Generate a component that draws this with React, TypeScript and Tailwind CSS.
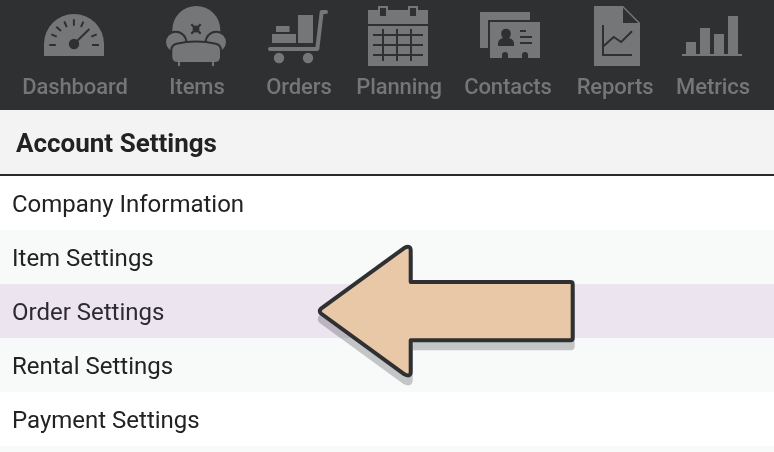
import type { ReactNode } from "react";

const dark = "#2f3032";
const grey = "#757678";

type Item = { label: string; cell: string; viewBox: string; icon: ReactNode };

const items: Item[] = [
  {
    label: "Dashboard",
    cell: "w-[150px]",
    viewBox: "45 6 60 60",
    icon: (
      <>
        <path d="M44 56V44a30 30 0 0 1 60 0v12z" />
        <path
          d="M49.3 45h6.5M51.3 34.3l5.4 2.4M56.3 26.7l4.7 4.3M64.3 21.3l2.4 5.7M73.9 19.3v6.4M83.4 21.7L81 27M96.7 34.3l-5.4 2.4M92 45h7M74 44l15.4-15"
          stroke={dark}
          strokeWidth="2"
        />
        <circle cx="74" cy="44" r="5.2" fill={dark} />
      </>
    ),
  },
  {
    label: "Items",
    cell: "w-[94px]",
    viewBox: "167 6 60 60",
    icon: (
      <>
        <path d="M172.3 50V30a24 24 0 0 1 48 0v20z" />
        <g stroke={dark} strokeWidth="4" paintOrder="stroke">
          <circle cx="175.7" cy="42.3" r="9.6" />
          <circle cx="216.3" cy="42.3" r="9.6" />
          <path d="M172.3 50.5Q172.3 46 176.8 44.8Q196 40.2 215.6 44.8Q220 46 220 50.5V56.5Q220 62 214.5 62H177.8Q172.3 62 172.3 56.5z" />
        </g>
        <path d="M178 61h2v5h-2zM212 61h2v5h-2z" />
        <path d="M191.3 24.3l9.4 9.4M200.7 24.3l-9.4 9.4" stroke={dark} strokeWidth="2.2" />
        <circle cx="196" cy="29" r="3.4" fill={dark} />
      </>
    ),
  },
  {
    label: "Orders",
    cell: "w-[110px]",
    viewBox: "269 6 60 60",
    icon: (
      <>
        <path d="M276 26h13.5v6H276zM272 34h24v9h-24zM298 15h15v28h-15z" />
        <path
          d="M270 49H317.3L321.7 12H326"
          fill="none"
          stroke={grey}
          strokeWidth="4"
          strokeLinecap="round"
          strokeLinejoin="round"
        />
        <circle cx="279" cy="58" r="5.2" />
        <circle cx="308" cy="58" r="5.2" />
      </>
    ),
  },
  {
    label: "Planning",
    cell: "w-[90px]",
    viewBox: "369 6 60 60",
    icon: (
      <>
        <path d="M368 10h60v14h-60zM368 26h60v40h-60zM378 6h10v10h-10zM408 6h10v10h-10z" />
        <path d="M380 8h6v8h-6zM410 8h6v8h-6z" fill={dark} />
        <path
          d="M373 35h50M373 45h50M373 55h50M383 29v32M397 29v32M411 29v32"
          stroke={dark}
          strokeWidth="2"
        />
      </>
    ),
  },
  {
    label: "Contacts",
    cell: "w-[128px]",
    viewBox: "478 6 60 60",
    icon: (
      <>
        <path d="M480 12h50v36h-50z" />
        <path d="M488 20h54v40h-54z" fill={dark} />
        <path d="M490 22h50v36h-50z" />
        <g fill={dark}>
          <path d="M498 46v-2.5c0-3 2-4.500 5-5.500c-1-1-1.800-2.500-1.800-4.500a4.800 4.800 0 0 1 9.600 0c0 2-.8 3.500-1.800 4.500c3 1 5 2.500 5 5.500V46z" />
          <path d="M520 30h6v2h-6zM520 36h12v2h-12zM520 42h12v2h-12z" />
          <path d="M502 58v-3a3 3 0 0 1 6 0v3zM522 58v-3a3 3 0 0 1 6 0v3z" />
        </g>
      </>
    ),
  },
  {
    label: "Reports",
    cell: "w-[86px]",
    viewBox: "585 6 60 60",
    icon: (
      <>
        <path d="M594 6h29.2L640 22.8V66h-46z" />
        <path d="M623 7.8V23h15.2z" fill={dark} />
        <path d="M603 25v30h29M603.7 46l10-9 7.5 5 10.8-10.7" fill="none" stroke={dark} strokeWidth="2" />
      </>
    ),
  },
  {
    label: "Metrics",
    cell: "w-[110px]",
    viewBox: "683 6 60 60",
    icon: <path d="M682 54h4V42h10v12h4V28h10v26h4V34h10v20h4V16h10v38h4v2h-60z" />,
  },
];

const rows = [
  { label: "Company Information", bg: "bg-white" },
  { label: "Item Settings", bg: "bg-[#f8f9f9]" },
  { label: "Order Settings", bg: "bg-[#ece5f0] text-[#2c2b2f]" },
  { label: "Rental Settings", bg: "bg-[#f8f9f9]" },
  { label: "Payment Settings", bg: "bg-white" },
];

const arrow =
  "M321 308.700L404.500 247.800Q410.700 244.800 410.700 250.500V282H570.500Q572.700 282 572.700 284.200V338Q572.700 340.200 570.500 340.200H410.700V371.500Q410.700 377.500 404.500 374.300L321 313.500Q318.500 311.100 321 308.700z";

export default function App() {
  return (
    <div className="relative h-[452px] w-[774px] overflow-hidden bg-[#f8f9f9] font-['Roboto',sans-serif] text-[#212224]">
      <nav className="flex h-[110px] bg-[#2f3032] pt-1.5 text-[#757678]">
        {items.map((item) => (
          <a key={item.label} className={`flex shrink-0 flex-col items-center ${item.cell}`}>
            <svg viewBox={item.viewBox} fill={grey} className="size-[60px] shrink-0 overflow-visible">
              {item.icon}
            </svg>
            <span className="mt-1.5 text-[22px] leading-[30px] font-medium tracking-[-0.1px] whitespace-nowrap">
              {item.label}
            </span>
          </a>
        ))}
      </nav>
      <header className="flex h-[66px] items-center border-b-2 border-[#2a2a2c] bg-[#f3f3f3] px-4 pt-0.5">
        <h1 className="text-[26px] leading-8 font-bold">Account Settings</h1>
      </header>
      <ul>
        {rows.map((row) => (
          <li key={row.label} className={`flex h-[54px] items-center px-3 pt-0.5 text-2xl ${row.bg}`}>
            {row.label}
          </li>
        ))}
      </ul>
      <svg viewBox="0 0 774 452" className="pointer-events-none absolute inset-0 h-[452px] w-[774px]">
        <path
          d={arrow}
          transform="translate(0 8)"
          fill="#cacacc"
          stroke="#cacacc"
          strokeWidth="4"
          className="mix-blend-multiply"
        />
        <path d={arrow} fill="#e9c8a8" stroke="#2f3032" strokeWidth="4" strokeLinejoin="round" />
      </svg>
    </div>
  );
}
